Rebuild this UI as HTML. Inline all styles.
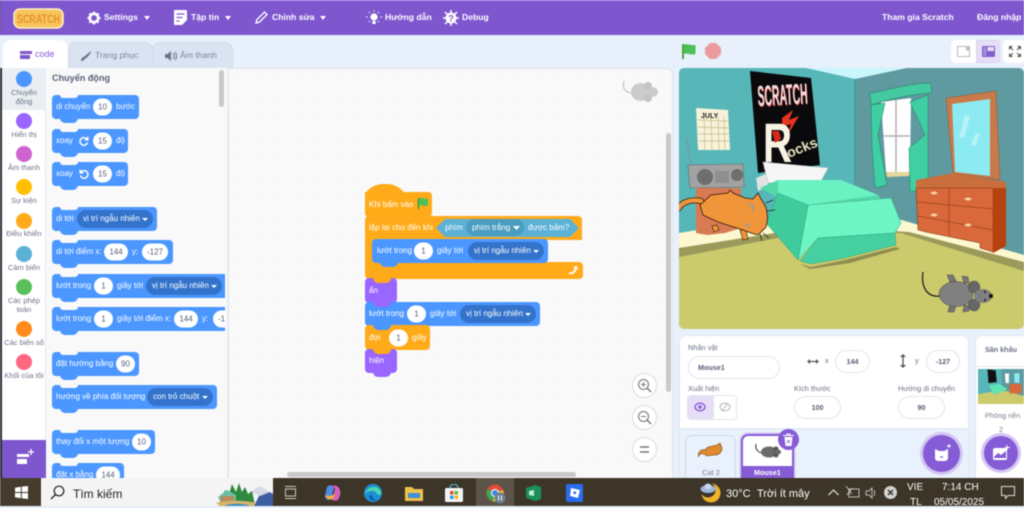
<!DOCTYPE html>
<html lang="vi"><head><meta charset="utf-8"><title>Scratch</title>
<style>
html,body{margin:0;padding:0}
body{width:1024px;height:506px;overflow:hidden;position:relative;background:#e8f0fb;font-family:"Liberation Sans","Noto Sans CJK SC",sans-serif;filter:blur(.45px)}
div,span,svg{position:absolute;box-sizing:border-box}
.t{white-space:nowrap;line-height:1}
.top{color:#fff;font-size:8.6px;font-weight:bold;top:13px}
.cat{left:2px;width:44px;text-align:center;font-size:7.5px;color:#6b7186;line-height:9px}
.c{left:16px;width:16px;height:16px;border-radius:50%}
.b{background:#4c97ff;border-radius:4px;height:24px;color:#fff;font-size:8px;white-space:nowrap}
.b:after{content:"";position:absolute;left:8px;bottom:-4px;width:18px;height:5px;background:inherit;border-radius:0 0 6px 6px;z-index:1}
.n:before{content:"";position:absolute;left:8px;top:0;width:18px;height:3px;background:#f9f9f9;border-radius:0 0 6px 6px}
.b>span{top:50%;transform:translateY(-50%);line-height:1}
.i{background:#fff;color:#575e75;border-radius:9px;height:17px;line-height:17px!important;text-align:center}
.d{background:#3373cc;color:#fff;border-radius:9px;height:18px;line-height:18px!important;padding-left:6px}
.d:after{content:"";position:absolute;right:5px;top:8px;border:3px solid transparent;border-top:3px solid #fff}
.o{background:#ffab19}
.p{background:#9966ff}
.f{background:#fff;border:1px solid #e3e4ef;border-radius:12px;color:#575e75;font-size:7.2px;text-align:center;font-weight:bold}
.l{color:#6b7186;font-size:7.4px}
.w{color:#fff;font-size:10px}
</style></head><body>

<!-- top bar -->
<div style="left:0;top:0;width:1024px;height:35px;background:#7e57cf;border-top:1px solid #9a7ce0"></div>
<div style="left:0;top:0;width:1px;height:35px;background:#4a3480"></div>
<svg style="left:13px;top:8px" width="51" height="21"><rect x="1" y="1" width="49" height="19" rx="6" fill="#f6c55c" stroke="#fff2c4" stroke-width="1.500"/><text x="4" y="15" font-size="12" font-weight="bold" fill="#e8932a" font-family="Liberation Sans" textLength="43" lengthAdjust="spacingAndGlyphs">SCRATCH</text></svg>
<svg style="left:86px;top:10px" width="16" height="16" viewBox="0 0 16 16"><circle cx="8" cy="8" r="4.200" fill="none" stroke="#fff" stroke-width="2.600"/><path d="M8 1.500v2M8 12.500v2M1.500 8h2M12.500 8h2M3.400 3.400l1.400 1.400M11.200 11.200l1.400 1.400M12.600 3.400l-1.400 1.400M4.800 11.200l-1.400 1.400" stroke="#fff" stroke-width="2"/></svg>
<div class="t top" style="left:104px">Settings</div><svg style="left:144px;top:16px" width="6" height="4"><path d="M0 0h6L3 4z" fill="#fff"/></svg>
<svg style="left:174px;top:10px" width="13" height="15" viewBox="0 0 13 15"><path d="M1 0h11a1 1 0 0 1 1 1v9l-5 5H1a1 1 0 0 1-1-1V1a1 1 0 0 1 1-1z" fill="#fff"/><path d="M2.500 4h8M2.500 7.500h6M2.500 11h3" stroke="#7e57cf" stroke-width="1.300"/></svg>
<div class="t top" style="left:191px">Tập tin</div><svg style="left:225px;top:16px" width="6" height="4"><path d="M0 0h6L3 4z" fill="#fff"/></svg>
<svg style="left:255px;top:11px" width="13" height="13" viewBox="0 0 13 13"><path d="M1 12l1-3.500L9.500 1l2.500 2.500L4.500 11z" fill="none" stroke="#fff" stroke-width="1.300"/></svg>
<div class="t top" style="left:272px">Chỉnh sửa</div><svg style="left:320px;top:16px" width="6" height="4"><path d="M0 0h6L3 4z" fill="#fff"/></svg>
<svg style="left:366px;top:10px" width="16" height="16" viewBox="0 0 16 16"><circle cx="8" cy="7" r="3.600" fill="#fff"/><rect x="6.300" y="11" width="3.400" height="3" fill="#fff"/><path d="M8 0v1.500M1.500 7H0M16 7h-1.500M3 2l1 1M13 2l-1 1M3 12l1-1M13 12l-1-1" stroke="#fff" stroke-width="1"/></svg>
<div class="t top" style="left:385px">Hướng dẫn</div>
<svg style="left:443px;top:10px" width="16" height="16" viewBox="0 0 16 16"><circle cx="8" cy="8" r="5.500" fill="#fff"/><path d="M8 0v16M0 8h16M2 2l12 12M14 2L2 14" stroke="#fff" stroke-width="1.500"/><text x="8" y="11.500" text-anchor="middle" font-size="9" font-weight="bold" fill="#7e57cf" font-family="Liberation Sans">?</text></svg>
<div class="t top" style="left:462px">Debug</div>
<div class="t top" style="left:882px">Tham gia Scratch</div>
<div class="t top" style="left:977px">Đăng nhập</div>

<!-- tabs -->
<div style="left:3px;top:40px;width:65px;height:30px;background:#fff;border-radius:8px 8px 0 0"></div>
<div style="left:68px;top:42px;width:85px;height:27px;background:#d9e3f2;border-radius:8px 8px 0 0;border:1px solid #d0d9e8;border-bottom:0"></div>
<div style="left:152px;top:42px;width:81px;height:27px;background:#d9e3f2;border-radius:8px 8px 0 0;border:1px solid #d0d9e8;border-bottom:0"></div>
<svg style="left:20px;top:50px" width="12" height="10"><path d="M0 1h12v3H0zM0 5h10v4H0z" fill="#7e57cf"/></svg>
<div class="t" style="left:35px;top:50px;font-size:9px;color:#855cd6">code</div>
<svg style="left:80px;top:50px" width="12" height="12" viewBox="0 0 12 12"><path d="M1 11c0-3 2-4 3.500-4.500L11 1c0 2-3 6-6 8-1 1-2 2-4 2z" fill="#6e7488"/></svg>
<div class="t" style="left:95px;top:51px;font-size:8.600px;color:#7f8599">Trang phục</div>
<svg style="left:165px;top:51px" width="12" height="10" viewBox="0 0 12 10"><path d="M0 3h2.500L6 0v10L2.500 7H0z" fill="#6e7488"/><path d="M8 2c1.500 1.500 1.500 4.500 0 6M10 1c2 2 2 6 0 8" stroke="#6e7488" fill="none"/></svg>
<div class="t" style="left:180px;top:51px;font-size:8.600px;color:#7f8599">Âm thanh</div>

<!-- category column -->
<div style="left:2px;top:68px;width:225px;height:410px;background:#f9f9f9"></div>
<div style="left:0;top:68px;width:2px;height:410px;background:#2a2a30"></div>
<div style="left:2px;top:68px;width:44px;height:372px;background:#fff;border-right:1px solid #e6e8ee"></div>
<div style="left:2px;top:68px;width:44px;height:42px;background:#e9eef2"></div>
<div class="c" style="top:71px;background:#4c97ff"></div><div class="cat" style="top:88px">Chuyển<br>động</div>
<div class="c" style="top:113px;background:#9966ff"></div><div class="cat" style="top:130px">Hiển thị</div>
<div class="c" style="top:146px;background:#cf63cf"></div><div class="cat" style="top:163px">Âm thanh</div>
<div class="c" style="top:179px;background:#ffbf00"></div><div class="cat" style="top:196px">Sự kiện</div>
<div class="c" style="top:213px;background:#ffab19"></div><div class="cat" style="top:229px">Điều khiển</div>
<div class="c" style="top:246px;background:#5cb1d6"></div><div class="cat" style="top:263px">Cảm biến</div>
<div class="c" style="top:279px;background:#59c059"></div><div class="cat" style="top:296px">Các phép<br>toán</div>
<div class="c" style="top:321px;background:#ff8c1a"></div><div class="cat" style="top:338px">Các biến số</div>
<div class="c" style="top:354px;background:#ff6680"></div><div class="cat" style="top:371px">Khối của tôi</div>
<div style="left:2px;top:440px;width:44px;height:38px;background:#7e57cf"></div>
<svg style="left:16px;top:449px" width="18" height="18" viewBox="0 0 18 18"><path d="M1 5h12v3H1zM1 10h10v5H1z" fill="#fff"/><path d="M15 0v6M12 3h6" stroke="#fff" stroke-width="1.300"/></svg>

<!-- palette -->
<div style="left:46px;top:68px;width:179px;height:410px;overflow:hidden">
<div class="t" style="left:6px;top:6px;font-size:9.100px;font-weight:bold;color:#575e75">Chuyển động</div>
<div class="b n" style="left:6px;top:27px;width:87px"><span style="left:4px">di chuyển</span><span class="i" style="left:41px;width:19px">10</span><span style="left:64px">bước</span></div>
<div class="b n" style="left:6px;top:61px;width:76px"><span style="left:4px">xoay</span><svg style="left:27px;top:7px" width="10" height="10" viewBox="0 0 10 10"><path d="M8.500 6.500a3.800 3.800 0 1 1-1.200-4" fill="none" stroke="#fff" stroke-width="1.500"/><path d="M9.500 0v4.500H5z" fill="#fff"/></svg><span class="i" style="left:41px;width:19px">15</span><span style="left:64px">độ</span></div>
<div class="b n" style="left:6px;top:94px;width:76px"><span style="left:4px">xoay</span><svg style="left:27px;top:7px" width="10" height="10" viewBox="0 0 10 10"><path d="M1.500 6.500a3.800 3.800 0 1 0 1.200-4" fill="none" stroke="#fff" stroke-width="1.500"/><path d="M.5 0v4.500H5z" fill="#fff"/></svg><span class="i" style="left:41px;width:19px">15</span><span style="left:64px">độ</span></div>
<div class="b n" style="left:6px;top:139px;width:105px"><span style="left:4px">di tới</span><span class="d" style="left:25px;width:76px">vị trí ngẫu nhiên</span></div>
<div class="b n" style="left:6px;top:172px;width:121px"><span style="left:4px">di tới điểm x:</span><span class="i" style="left:52px;width:24px">144</span><span style="left:80px">y:</span><span class="i" style="left:90px;width:26px">-127</span></div>
<div class="b n" style="left:6px;top:206px;width:180px"><span style="left:4px">lướt trong</span><span class="i" style="left:42px;width:19px">1</span><span style="left:65px">giây tới</span><span class="d" style="left:94px;width:76px">vị trí ngẫu nhiên</span></div>
<div class="b n" style="left:6px;top:239px;width:180px"><span style="left:4px">lướt trong</span><span class="i" style="left:42px;width:19px">1</span><span style="left:65px">giây tới điểm x:</span><span class="i" style="left:122px;width:24px">144</span><span style="left:150px">y:</span><span class="i" style="left:161px;width:26px;text-align:left;padding-left:5px">-127</span></div>
<div class="b n" style="left:6px;top:284px;width:87px"><span style="left:4px">đặt hướng bằng</span><span class="i" style="left:64px;width:19px">90</span></div>
<div class="b n" style="left:6px;top:317px;width:165px"><span style="left:4px">hướng về phía đối tượng</span><span class="d" style="left:95px;width:66px">con trỏ chuột</span></div>
<div class="b n" style="left:6px;top:362px;width:103px"><span style="left:4px">thay đổi x một lượng</span><span class="i" style="left:80px;width:19px">10</span></div>
<div class="b n" style="left:6px;top:395px;width:72px"><span style="left:4px">đặt x bằng</span><span class="i" style="left:44px;width:24px">144</span></div>
</div>
<div style="left:219px;top:70px;width:5px;height:37px;background:#c9c9c9;border-radius:3px"></div>

<!-- workspace -->
<div style="left:228px;top:68px;width:445px;height:410px;background:#f9f9f9;border:1px solid #dfe3ec;border-bottom:0;border-radius:0 6px 0 0"></div>
<svg style="left:229px;top:69px" width="443" height="408"><defs><pattern id="g" width="20" height="20" patternUnits="userSpaceOnUse"><circle cx="10" cy="10" r=".7" fill="#efefef"/></pattern></defs><rect width="443" height="408" fill="url(#g)"/></svg>
<div style="left:666px;top:133px;width:5px;height:259px;background:#c9c9c9;border-radius:3px"></div>
<div style="left:287px;top:472px;width:289px;height:5px;background:#c9c9c9;border-radius:3px"></div>
<svg style="left:622px;top:80px" width="37" height="24" viewBox="0 0 37 24"><path d="M2 1C0 8 3 13 11 13" fill="none" stroke="#c4c4c4" stroke-width="1.300"/><ellipse cx="19" cy="12" rx="10" ry="9" fill="#cbcbcb"/><circle cx="26" cy="6" r="4" fill="#c4c4c4"/><circle cx="26" cy="18" r="4" fill="#c4c4c4"/><ellipse cx="30" cy="12" rx="6" ry="5" fill="#cbcbcb"/></svg>
<div style="left:632px;top:373px;width:25px;height:25px;background:#fff;border:1.500px solid #dcdcdc;border-radius:50%"></div>
<svg style="left:637px;top:378px" width="15" height="15" viewBox="0 0 15 15"><circle cx="6.500" cy="6.500" r="5" fill="none" stroke="#777" stroke-width="1.100"/><path d="M10 10l4 4" stroke="#777" stroke-width="1.300"/><path d="M6.500 4v5M4 6.500h5" stroke="#777"/></svg>
<div style="left:632px;top:405px;width:25px;height:25px;background:#fff;border:1.500px solid #dcdcdc;border-radius:50%"></div>
<svg style="left:637px;top:410px" width="15" height="15" viewBox="0 0 15 15"><circle cx="6.500" cy="6.500" r="5" fill="none" stroke="#777" stroke-width="1.100"/><path d="M10 10l4 4" stroke="#777" stroke-width="1.300"/><path d="M4 6.500h5" stroke="#777"/></svg>
<div style="left:632px;top:437px;width:25px;height:25px;background:#fff;border:1.500px solid #dcdcdc;border-radius:50%"></div>
<svg style="left:639px;top:445px" width="11" height="9"><path d="M1 2h9M1 7h9" stroke="#777" stroke-width="1.500"/></svg>

<!-- script -->
<div class="b o" style="left:365px;top:192px;width:67px;height:25px;border-radius:0 4px 4px 4px"><span style="left:4px">Khi bấm vào</span></div>
<svg style="left:365px;top:183px" width="42" height="11"><path d="M0 11C6 2 14 1 20 1s14 1 20 10z" fill="#ffab19"/></svg>
<svg style="left:417px;top:197px" width="12" height="13" viewBox="0 0 12 13"><path d="M1.500 1v11" stroke="#3f9c35" stroke-width="1.500"/><path d="M2 1.500c3-1.500 5 1 9 0v7c-4 1.500-6-1-9 0z" fill="#4cbf56"/></svg>
<div style="left:365px;top:216px;width:217px;height:24px;background:#ffab19;border-radius:4px 4px 0 4px"></div>
<div style="left:365px;top:238px;width:8px;height:26px;background:#ffab19"></div>
<div class="b o" style="left:365px;top:262px;width:218px;height:17px;border-radius:0 4px 4px 4px"></div>
<div class="t" style="left:369px;top:224px;font-size:8px;color:#fff">lặp lại cho đến khi</div>
<svg style="left:435px;top:218px" width="146" height="20"><path d="M10 1h125l9 9-9 9H10L1 10z" fill="#5cb1d6"/></svg>
<div class="t" style="left:445px;top:224px;font-size:8px;color:#fff">phím</div>
<div class="t" style="left:466px;top:219px;width:58px;height:17px;background:#4a9cc0;border-radius:9px;font-size:8px;color:#fff;line-height:17px;padding-left:6px">phím trắng</div>
<svg style="left:513px;top:226px" width="7" height="5"><path d="M0 0h7L3.500 4z" fill="#fff"/></svg>
<div class="t" style="left:528px;top:224px;font-size:8px;color:#fff">được bấm?</div>
<div class="b" style="left:372px;top:239px;width:176px;height:24px"><span style="left:5px">lướt trong</span><span class="i" style="left:42px;width:19px">1</span><span style="left:65px">giây tới</span><span class="d" style="left:96px;width:76px">vị trí ngẫu nhiên</span></div>
<svg style="left:568px;top:265px" width="11" height="10" viewBox="0 0 11 10"><path d="M1 8c4 1 6-1 7-5" stroke="#fff" stroke-width="1.800" fill="none"/><path d="M5 3l3.500-2.500L10 5z" fill="#fff"/></svg>
<div class="b p" style="left:365px;top:278px;width:32px;height:25px"><span style="left:4px">ẩn</span></div>
<div class="b" style="left:365px;top:302px;width:175px;height:24px"><span style="left:4px">lướt trong</span><span class="i" style="left:42px;width:19px">1</span><span style="left:65px">giây tới</span><span class="d" style="left:95px;width:76px">vị trí ngẫu nhiên</span></div>
<div class="b o" style="left:365px;top:325px;width:65px;height:25px"><span style="left:4px">đợi</span><span class="i" style="left:24px;width:19px">1</span><span style="left:47px">giây</span></div>
<div class="b p" style="left:365px;top:349px;width:32px;height:24px"><span style="left:4px">hiện</span></div>

<!-- stage header -->
<svg style="left:681px;top:43px" width="17" height="17" viewBox="0 0 17 17"><path d="M2 1v15" stroke="#3f9c35" stroke-width="1.800"/><path d="M2.500 2c4-2 7 1 12 0v9c-5 1.500-8-1.500-12 0z" fill="#4cbf56"/></svg>
<svg style="left:705px;top:43px" width="16" height="16"><path d="M5 0h6l5 5v6l-5 5H5l-5-5V5z" fill="#ec9a9e"/></svg>
<div style="left:951px;top:40px;width:25px;height:23px;background:#fff;border-radius:4px 0 0 4px"></div>
<svg style="left:957px;top:46px" width="14" height="11"><rect x=".5" y=".5" width="12" height="10" fill="none" stroke="#bbb"/><rect x="9" y=".5" width="3.500" height="4" fill="#bbb"/></svg>
<div style="left:976px;top:40px;width:24px;height:23px;background:#e6def6;border:1px solid #dcd3f0;border-radius:0 4px 4px 0"></div>
<svg style="left:982px;top:46px" width="13" height="11"><rect width="13" height="11" rx="1" fill="#7f5fc8"/><rect x="5.500" y="1" width="6.500" height="4" fill="#e6def6"/><rect x="1" y="1" width="3.500" height="9" fill="#a48bdc"/></svg>
<div style="left:1003px;top:40px;width:21px;height:23px;background:#fff;border-radius:4px 0 0 4px"></div>
<svg style="left:1009px;top:46px" width="12" height="11"><path d="M0 0h4L0 4zM12 0H8l4 4zM0 11h4L0 7zM12 11H8l4-4z" fill="#555"/><path d="M1 1l3 3M11 1L8 4M1 10l3-3M11 10L8 7" stroke="#555"/></svg>

<!-- stage -->
<svg style="left:679px;top:68px" width="345" height="261" viewBox="679 68 345 261">
<defs><clipPath id="st"><rect x="679" y="68" width="345" height="261" rx="5"/></clipPath></defs>
<g clip-path="url(#st)">
<rect x="679" y="68" width="176" height="200" fill="#56b6b8"/>
<rect x="855" y="68" width="169" height="210" fill="#5e9aa0"/>
<path d="M806 68h101l-52 11z" fill="#c9f5fb"/>
<path d="M855 79v150" stroke="#3f8f92" stroke-width=".8"/>
<path d="M679 233l170-28 175 50v80H679z" fill="#fdf8cf"/>
<path d="M679 248l140-22 90 6 115 30v20H679z" fill="#9b9a5a"/>
<path d="M679 257l130-25 92 1 123 38v58H679z" fill="#cbca6c"/>
<!-- calendar -->
<path d="M696 108l32 2 2 40-32 0z" fill="#f6f3da"/>
<path d="M698 120l30 1M698 127l31 1M698 134l31 0M699 141l30 0M704 116l1 34M711 116l1 34M718 116l1 34M724 116l1 34" stroke="#c9b886" stroke-width=".7"/>
<text x="701" y="118" font-size="7" font-weight="bold" fill="#222" font-family="Liberation Sans">JULY</text>
<!-- poster -->
<path d="M750 71l61 7 9 87-62 8z" fill="#0a0a0c"/>
<text x="758.500" y="107" font-size="29" font-weight="bold" fill="#d83a3a" font-family="Liberation Sans" transform="rotate(-3 758 106)" textLength="50" lengthAdjust="spacingAndGlyphs">SCRATCH</text>
<text x="758" y="106" font-size="29" font-weight="bold" fill="#f6dcdc" font-family="Liberation Sans" transform="rotate(-3 758 106)" textLength="50" lengthAdjust="spacingAndGlyphs">SCRATCH</text>
<path d="M782 118l11-8-4 10 10-4-12 20 4-12-9 3z" fill="#e8331f"/>
<text x="0" y="0" font-size="56" font-weight="bold" fill="#f8f3e2" font-family="Liberation Sans" transform="translate(763 162) scale(.72 1)">R</text>
<path d="M772 131l3 12 6-4-2-8z" fill="#d8261a"/>
<text x="789" y="158" font-size="14" font-weight="bold" fill="#e8e3c0" font-family="Liberation Sans" transform="rotate(-22 789 158)">ocks</text>
<!-- radio -->
<path d="M691 165l-4-25" stroke="#888" stroke-width=".7"/>
<path d="M688 165l55-1 1 23-54 1z" fill="#a2a2a2" stroke="#666" stroke-width=".6"/>
<circle cx="705" cy="177" r="8" fill="#6e6e6e"/><circle cx="737" cy="175" r="6" fill="#6e6e6e"/>
<rect x="715" y="171" width="14" height="12" fill="#8f8f8f"/>
<!-- night table -->
<path d="M696 188h45v40l-16 5-18 2-11-2z" fill="#d97b52"/>
<!-- pillow/bed -->
<path d="M756 178l12-5v14l-10 4z" fill="#e2e2e2"/>
<path d="M763 162l65 6-7 13-53 2z" fill="#f6f6f6" stroke="#c5c5c5" stroke-width=".6"/>
<path d="M760 188l18-8h63l37 15 23 28-93-10z" fill="#55d8a9"/>
<path d="M778 180h63l37 15-70 10-30-12z" fill="#6bf2c2"/>
<path d="M808 205l83-7 10 25-6 10-77 5-20 22z" fill="#6df5c4" stroke="#3fa887" stroke-width=".5"/>
<path d="M766 223l12-30 30 12-10 55z" fill="#3fcb9c" stroke="#2e9a78" stroke-width=".4"/>
<path d="M818 238l77-5 1 12-51 13-34 6-11-3z" fill="#46cfa0" stroke="#2e9a78" stroke-width=".4"/>
<path d="M800 264l11 3 34-7 51-13 4 2-50 14-40 6z" fill="#8f8e52"/>
<!-- window -->
<path d="M881 102l30-4-1 74-24 0z" fill="#fff"/>
<path d="M896 100v72M884 136h26" stroke="#b6b6b6" stroke-width="1.600"/>
<path d="M886 172l24 0 1 4-24 1z" fill="#e6d79a"/>
<path d="M871 105l14-2-7 32 9 50-12 3-3-40z" fill="#3fcfa3" stroke="#227a60" stroke-width=".5"/>
<path d="M910 102l18-7v93l-18 4-1-44 16-13z" fill="#3fcfa3" stroke="#227a60" stroke-width=".5"/>
<path d="M870 93c15-2 40-10 60-10 2 3 2 8 1 10-20 1-45 7-60 12z" fill="#45c9a0" stroke="#227a60" stroke-width=".5"/>
<!-- mirror -->
<path d="M946 98l50-7 4 89-47-7z" fill="#c97a4a" stroke="#8a4a20" stroke-width=".4"/>
<path d="M952 104l38-5v77l-35-4z" fill="#8ceaf3"/>
<path d="M965 115l-6 22 5 1 6-22zM976 133l-5 12 4 1 5-12z" fill="#b6f2f6"/>
<!-- dresser -->
<path d="M916 180l38-7 52 9v6l-90 2z" fill="#c96f3d"/>
<path d="M916 188h77v64l-13-4v-5l-54-11-8-2z" fill="#d9683a" stroke="#7a3212" stroke-width=".5"/>
<path d="M993 188h13v58l-13 7z" fill="#b5420f"/>
<path d="M949 188v48M918 202l75 7M918 216l75 14" stroke="#7a3212" stroke-width=".5" fill="none"/>
<ellipse cx="934" cy="193" rx="3.500" ry="1.500" fill="#f1d3a0"/><ellipse cx="968" cy="199" rx="3.500" ry="1.500" fill="#f1d3a0"/>
<ellipse cx="934" cy="215" rx="3.500" ry="1.500" fill="#f1d3a0"/><ellipse cx="968" cy="225" rx="3.500" ry="1.500" fill="#f1d3a0"/>
<!-- cat -->
<path d="M679 208c3-6 12-9 22-7" stroke="#2a1a08" stroke-width="6" fill="none" stroke-linecap="round"/>
<path d="M679 208c3-6 12-9 22-7" stroke="#f0953a" stroke-width="4.500" fill="none" stroke-linecap="round"/>
<path d="M712 226l2 6 5-2-2-5zM740 230l3 10 5-1-2-9z" fill="#f0953a" stroke="#2a1a08" stroke-width=".6"/>
<path d="M700 205l11-10 17-2 2-3 3 3 12 5 8 1 5-6 3 6c3 4 6 9 6 14 1 6 0 11-1 14l-8 8c-5-1-10-3-15-5l-25-8-15-7z" fill="#f0953a" stroke="#2a1a08" stroke-width=".8"/>
<path d="M748 201l7 5-2 7zM744 226l5-4 1 6z" fill="#b59a7a"/>
<path d="M766 203l7-3M767 211l8-1M760 234l2 7M763 233l6 5" stroke="#222" stroke-width=".8"/>
<!-- mouse -->
<path d="M923 272c-2 14 3 26 18 24" stroke="#222" stroke-width="1.300" fill="none"/>
<path d="M950 282l-3-7h6l3 6zM964 283l-2-7 6 1 1 6zM950 304l-2 8 6 0 2-6zM964 305l-1 7 6-1 0-5z" fill="#777" stroke="#444" stroke-width=".5"/>
<ellipse cx="956" cy="294" rx="17" ry="12.500" fill="#808080" stroke="#444" stroke-width=".5"/>
<circle cx="974" cy="287" r="6" fill="#666" stroke="#444" stroke-width=".4"/><circle cx="974" cy="305" r="6" fill="#666" stroke="#444" stroke-width=".4"/>
<ellipse cx="983" cy="296" rx="9" ry="7" fill="#808080"/>
<circle cx="991" cy="296" r="2" fill="#111"/><circle cx="985" cy="292" r="1" fill="#111"/><circle cx="985" cy="300" r="1" fill="#111"/>
</g></svg>

<!-- sprite panel -->
<div style="left:679px;top:335px;width:290px;height:150px;background:#fff;border:1px solid #e3e6f0;border-radius:8px 8px 0 0"></div>
<div style="left:680px;top:428px;width:288px;height:52px;background:#e9f1fc;border-top:1px solid #dfe5f0"></div>
<div class="t l" style="left:688px;top:344px">Nhân vật</div>
<div class="f t" style="left:688px;top:356px;width:92px;height:23px;line-height:21px;text-align:left;padding-left:9px;border-radius:12px">Mouse1</div>
<svg style="left:807px;top:358px" width="12" height="7"><path d="M1 3.500h10" stroke="#555" stroke-width="1.200"/><path d="M0 3.500L3 1v5zM12 3.500L9 1v5z" fill="#555"/></svg>
<div class="t l" style="left:825px;top:357px">x</div>
<div class="f t" style="left:835px;top:350px;width:35px;height:23px;line-height:21px">144</div>
<svg style="left:899px;top:354px" width="8" height="14"><path d="M4 1v12" stroke="#555" stroke-width="1.300"/><path d="M4 0l3 3H1zM4 14l3-3H1z" fill="#555"/></svg>
<div class="t l" style="left:915px;top:357px">y</div>
<div class="f t" style="left:926px;top:350px;width:34px;height:23px;line-height:21px">-127</div>
<div class="t l" style="left:688px;top:385px">Xuất hiện</div>
<div class="t l" style="left:794px;top:385px">Kích thước</div>
<div class="t l" style="left:898px;top:385px">Hướng di chuyển</div>
<div style="left:687px;top:395px;width:26px;height:25px;background:#e6def6;border:1px solid #e3e4ef;border-radius:4px 0 0 4px"></div>
<div style="left:713px;top:395px;width:24px;height:25px;background:#fff;border:1px solid #e3e4ef;border-radius:0 4px 4px 0"></div>
<svg style="left:694px;top:402px" width="12" height="10"><ellipse cx="6" cy="5" rx="5" ry="3.800" fill="none" stroke="#855cd6" stroke-width="1.300"/><circle cx="6" cy="5" r="1.800" fill="#855cd6"/></svg>
<svg style="left:719px;top:402px" width="12" height="10"><ellipse cx="6" cy="5" rx="5" ry="3.800" fill="none" stroke="#b5b5b5"/><path d="M3 9l6-8" stroke="#b5b5b5"/></svg>
<div class="f t" style="left:794px;top:396px;width:47px;height:23px;line-height:21px">100</div>
<div class="f t" style="left:898px;top:396px;width:47px;height:23px;line-height:21px">90</div>
<div style="left:685px;top:435px;width:51px;height:50px;background:#e9f1fc;border:1.500px solid #cdd6e6;border-radius:7px"></div>
<svg style="left:698px;top:443px" width="26" height="15" viewBox="0 0 26 15"><path d="M0 11c2-4 4-5 7-4l3-3 9-2 3-2 2 5c0 4-3 7-7 7l-8 1-3-2c-3-1-4 0-6 3z" fill="#e08a30" stroke="#6e4012" stroke-width=".6"/></svg>
<div class="t" style="left:702px;top:469px;font-size:7.500px;color:#7a7f92">Cat 2</div>
<div style="left:741px;top:434px;width:53px;height:52px;background:#fff;border:2.500px solid #855cd6;border-radius:7px;box-shadow:0 0 0 1.500px #d6c8f3"></div>
<div style="left:743px;top:466px;width:49px;height:14px;background:#855cd6"></div>
<div class="t" style="left:754px;top:469px;font-size:7.200px;color:#fff;font-weight:bold">Mouse1</div>
<svg style="left:755px;top:443px" width="26" height="16" viewBox="0 0 26 16"><path d="M1 1c-1 5 2 9 7 9" fill="none" stroke="#333"/><ellipse cx="14" cy="9" rx="8" ry="5.500" fill="#6a6a6a"/><circle cx="21" cy="6" r="2.500" fill="#555"/><circle cx="21" cy="12" r="2.500" fill="#555"/><ellipse cx="23" cy="9" rx="3" ry="2.500" fill="#6a6a6a"/></svg>
<div style="left:778px;top:429px;width:21px;height:21px;background:#855cd6;border-radius:50%"></div>
<svg style="left:783px;top:433px" width="11" height="13"><path d="M0 2.500h11M4 2.500V1h3v1.500" stroke="#fff" fill="none"/><path d="M1.500 4h8l-1 9h-6z" fill="#fff"/><path d="M4 7l3 3M7 7l-3 3" stroke="#855cd6" stroke-width=".8"/></svg>
<div style="left:923px;top:435px;width:37px;height:37px;background:#855cd6;border-radius:50%;box-shadow:0 0 0 3px #d4c6f2"></div>
<svg style="left:933px;top:444px" width="19" height="19" viewBox="0 0 19 19"><path d="M2 5l4 2h5l4-2v9c0 2-2 3-4 3H6c-2 0-4-1-4-3z" fill="#fff"/><path d="M7 13h3" stroke="#855cd6" stroke-width="1.200"/><path d="M16 0v4M14 2h4" stroke="#fff"/></svg>

<!-- stage panel -->
<div style="left:975px;top:335px;width:55px;height:150px;background:#fff;border:1px solid #e3e6f0;border-radius:8px 0 0 0"></div>
<div class="t" style="left:985px;top:346px;font-size:7.200px;font-weight:bold;color:#6b7186">Sân khấu</div>
<div style="left:976px;top:366px;width:48px;height:1px;background:#e3e6f0"></div>
<svg style="left:978px;top:369px" width="46" height="35" viewBox="679 68 345 261" preserveAspectRatio="none"><rect x="679" y="68" width="176" height="200" fill="#56b6b8"/><rect x="855" y="68" width="169" height="200" fill="#5e9aa0"/><path d="M679 257l130-25 92 1 123 38v58H679z" fill="#cbca6c"/><path d="M750 71l61 7 9 87-62 8z" fill="#111"/><path d="M760 190l80-10 60 40-100 40z" fill="#5fe3b5"/><path d="M881 102h30v70h-25z" fill="#fff"/><path d="M916 180h90v70h-90z" fill="#d9683a"/><path d="M952 100h38v70h-38z" fill="#8ceaf3"/></svg>
<div class="t" style="left:985px;top:412px;font-size:7.300px;color:#7a7f92">Phòng nền</div>
<div class="t" style="left:999px;top:426px;font-size:7.500px;color:#7a7f92">2</div>
<div style="left:984px;top:436px;width:34px;height:34px;background:#855cd6;border-radius:50%;box-shadow:0 0 0 3px #d4c6f2"></div>
<svg style="left:993px;top:445px" width="17" height="16" viewBox="0 0 17 16"><rect y="3" width="14" height="12" rx="2" fill="#fff"/><path d="M1 12l4-4 3 2 5-4v7H1z" fill="#855cd6"/><path d="M14 0v5M12 2.500h5" stroke="#fff"/></svg>

<!-- taskbar -->
<div style="left:0;top:478px;width:1024px;height:28px;background:#3d3528"></div>
<div style="left:0;top:478px;width:41px;height:28px;background:#453c2e"></div>
<svg style="left:15px;top:486px" width="13" height="13"><path d="M0 1.700l5.800-.9V6H0zM6.800.6L13 0v6H6.800zM0 7h5.800v5.200L0 11.300zM6.800 7H13v6l-6.200-.8z" fill="#fff"/></svg>
<div style="left:41px;top:478px;width:232px;height:28px;background:#f4f4f4"></div>
<svg style="left:50px;top:485px" width="15" height="15" viewBox="0 0 15 15"><circle cx="9" cy="6" r="4.800" fill="none" stroke="#222" stroke-width="1.200"/><path d="M5.500 9.500L1 14" stroke="#222" stroke-width="1.300"/></svg>
<div class="t" style="left:73px;top:488px;font-size:12px;color:#222">Tìm kiếm</div>
<svg style="left:212px;top:478px" width="61" height="28" viewBox="0 0 61 28"><path d="M42 28l9-18 10 6v12z" fill="#3c5ea0"/><path d="M38 14l10-6 10 6-10 4z" fill="#d8dbe6"/><path d="M8 24l5-12 4 4 3-10 4 8 3-9 3 9 3-5 3 7 4-3 3 14z" fill="#2e8a3e"/><path d="M6 19l9-7 9 5v6H8z" fill="#67c0a6"/><rect x="9" y="18" width="13" height="6" fill="#b98a5a"/><path d="M4 25c10-3 30-3 40 0l-2 3H8z" fill="#d9b26a"/><path d="M12 28c6-3 20-3 26 0z" fill="#3c8fc0"/></svg>
<svg style="left:284px;top:486px" width="13" height="13" fill="none" stroke="#cfc9bd"><rect x="1.500" y="3" width="10" height="7"/><path d="M1 .5h11M1 12.500h11"/></svg>
<svg style="left:324px;top:484px" width="18" height="18" viewBox="0 0 18 18"><path d="M3 3c3-3 6-2 7 1l-3 11c-2 2-6 1-6-3z" fill="#4d8de8"/><path d="M7 3c2-2 5-2 7 0 3 3 3 7 1 11-1 3-4 3-7 2l3-11c0-2-2-2-4-2z" fill="#d960c0"/><path d="M1 11c1 4 5 5 8 4l3-7c-1 3-7 5-11 3z" fill="#f0b040"/></svg>
<svg style="left:364px;top:484px" width="18" height="18" viewBox="0 0 18 18"><circle cx="9" cy="9" r="9" fill="#1b8fd6"/><path d="M1 10C2 4 9 1 14 4c3 2 4 6 2 7-3 1-3-3-6-4-4-1-7 1-9 3z" fill="#4fd6a8"/><path d="M5 12c0 3 4 6 8 4-3 0-5-2-5-5z" fill="#0c5ea6"/></svg>
<svg style="left:405px;top:485px" width="18" height="16"><path d="M0 2h7l2 2h9v12H0z" fill="#f0c24a"/><rect x="3" y="8" width="12" height="5" fill="#3d8fd6"/></svg>
<svg style="left:445px;top:484px" width="18" height="18"><path d="M5 4c0-5 8-5 8 0" fill="none" stroke="#4ab0c8" stroke-width="1.300"/><rect y="4" width="18" height="14" rx="1.500" fill="#f4f4f4"/><rect x="5" y="7" width="3.500" height="3.500" fill="#e8502a"/><rect x="9.500" y="7" width="3.500" height="3.500" fill="#6ab82e"/><rect x="5" y="11.500" width="3.500" height="3.500" fill="#2a9de8"/><rect x="9.500" y="11.500" width="3.500" height="3.500" fill="#f2b820"/></svg>
<div style="left:476px;top:478px;width:38px;height:28px;background:#5c5448"></div>
<svg style="left:486px;top:484px" width="20" height="20" viewBox="0 0 20 20"><circle cx="9" cy="9" r="8.500" fill="#e24a3a"/><path d="M9 9L1.500 5A8.500 8.500 0 0 0 7 17.300z" fill="#3fa652"/><path d="M9 9l-2 8.300A8.500 8.500 0 0 0 17 6z" fill="#f4c430"/><circle cx="9" cy="9" r="4" fill="#fff"/><circle cx="9" cy="9" r="3" fill="#3f85e8"/><circle cx="14" cy="14" r="5.500" fill="#6a7f90"/><path d="M12.500 11.500v5M15.500 11.500v5" stroke="#fff"/></svg>
<svg style="left:526px;top:485px" width="15" height="16"><path d="M0 3l9-3 6 2v12l-6 2-9-3z" fill="#1a8f5a"/><path d="M3 6l5-1v6l-5-1z" fill="#bff0d6"/></svg>
<svg style="left:566px;top:484px" width="17" height="18"><rect width="17" height="18" rx="2" fill="#2b6cf0"/><path d="M5 4l9 2-2 8-8-2z" fill="#fff"/><rect x="7.500" y="7.500" width="2.500" height="2.500" fill="#2b6cf0"/></svg>
<svg style="left:700px;top:483px" width="21" height="20" viewBox="0 0 21 20"><circle cx="11" cy="10" r="9.500" fill="#f0b429"/><circle cx="8" cy="7" r="7.500" fill="#3d3528"/><ellipse cx="8" cy="6" rx="7.500" ry="4" fill="#9db4dc"/><ellipse cx="8" cy="3.500" rx="3.500" ry="3" fill="#c8d6ee"/></svg>
<div class="t w" style="left:726px;top:489px;font-size:11px">30°C</div>
<div class="t w" style="left:757px;top:489px;font-size:11px">Trời ít mây</div>
<svg style="left:828px;top:489px" width="11" height="7"><path d="M.5 6L5.500 1l5 5" fill="none" stroke="#eee" stroke-width="1.100"/></svg>
<svg style="left:846px;top:486px" width="14" height="12" fill="none" stroke="#ddd" stroke-width=".8"><rect x="3" y="3" width="10" height="8"/><path d="M0 0l6 8M6 2L1 9"/></svg>
<svg style="left:865px;top:487px" width="13" height="12" fill="none" stroke="#ddd" stroke-width=".8"><path d="M1 4h3l3-3v10L4 8H1zM9 3c1 2 1 4 0 6"/></svg>
<svg style="left:884px;top:486px" width="13" height="13"><circle cx="6.500" cy="6.500" r="6.500" fill="#d4d4d4"/><path d="M4 4l5 5M9 4L4 9" stroke="#3d3528" stroke-width="1.500"/></svg>
<div class="t w" style="left:907px;top:483px;font-size:10px">VIE</div>
<div class="t w" style="left:910px;top:498px;font-size:10px">TL</div>
<div class="t w" style="left:942px;top:483px;font-size:10px">7:14 CH</div>
<div class="t w" style="left:934px;top:498px;font-size:10px">05/05/2025</div>
<svg style="left:1001px;top:486px" width="14" height="13" fill="none" stroke="#ddd"><path d="M.5.500h13v9H7L4.500 12.500V9.500h-4z"/></svg>
</body></html>
